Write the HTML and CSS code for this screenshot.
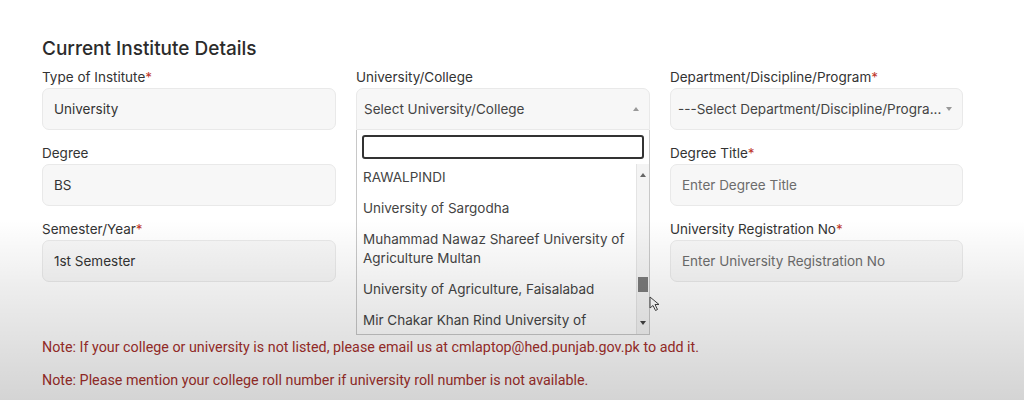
FILE: index.html
```html
<!DOCTYPE html>
<html>
<head>
  <title>Current Institute Details</title>
  <link rel="stylesheet" href="styles.css">
</head>
<body>
  <div class="page">
    <h2 class="section-title">Current Institute Details</h2>

    <div class="form-grid">
      <div class="field">
        <label>Type of Institute<span class="req">*</span></label>
        <div class="box">University</div>
      </div>

      <div class="field dropdown-field">
        <label>University/College</label>
        <div class="box select open">
          <span class="muted-dark">Select University/College</span>
          <span class="caret up"></span>
        </div>
        <div class="dropdown">
          <div class="search-wrap">
            <input class="search" type="text">
          </div>
          <div class="list-wrap">
            <ul class="options">
              <li class="first">RAWALPINDI</li>
              <li>University of Sargodha</li>
              <li>Muhammad Nawaz Shareef University of Agriculture Multan</li>
              <li>University of Agriculture, Faisalabad</li>
              <li>Mir Chakar Khan Rind University of</li>
            </ul>
            <div class="scrollbar">
              <span class="sb-arrow up"></span>
              <div class="sb-track"><div class="sb-thumb"></div></div>
              <span class="sb-arrow down"></span>
            </div>
          </div>
          <svg class="cursor" width="12" height="16" viewBox="0 0 12 16">
            <path d="M1 1 L1 12 L4 9.5 L6.5 14.5 L8.5 13.5 L6 8.5 L10 8.5 Z" fill="#fff" stroke="#444" stroke-width="1"/>
          </svg>
        </div>
      </div>

      <div class="field">
        <label>Department/Discipline/Program<span class="req">*</span></label>
        <div class="box select">
          <span class="muted-dark">---Select Department/Discipline/Progra...</span>
          <span class="caret down"></span>
        </div>
      </div>

      <div class="field">
        <label>Degree</label>
        <div class="box">BS</div>
      </div>

      <div class="field"></div>

      <div class="field">
        <label>Degree Title<span class="req">*</span></label>
        <div class="box placeholder">Enter Degree Title</div>
      </div>

      <div class="field">
        <label>Semester/Year<span class="req">*</span></label>
        <div class="box">1st Semester</div>
      </div>

      <div class="field"></div>

      <div class="field">
        <label>University Registration No<span class="req">*</span></label>
        <div class="box placeholder">Enter University Registration No</div>
      </div>
    </div>

    <p class="note first-note">Note: If your college or university is not listed, please email us at cmlaptop@hed.punjab.gov.pk to add it.</p>
    <p class="note">Note: Please mention your college roll number if university roll number is not available.</p>
  </div>
  <div class="shade"></div>
</body>
</html>
```

FILE: styles.css
```css
body {
    margin: 0;
    background-color: #ffffff;
    font-family: Inter, "Noto Sans", Arial, sans-serif;
    color: #333333;
    overflow: hidden;
}

.page {
    padding: 36px 0 0 42px;
    height: 364px;
}

.section-title {
    margin: 0 0 6px 0;
    font-size: 19px;
    font-weight: 500;
    color: #2b2b2b;
    line-height: 26px;
}

.form-grid {
    display: grid;
    grid-template-columns: 294px 294px 293px;
    column-gap: 20px;
    row-gap: 14px;
}

.field label {
    display: block;
    font-size: 13.5px;
    line-height: 18px;
    color: #333;
    margin-bottom: 2px;
}

.req {
    color: #c0392b;
}

.box {
    height: 42px;
    box-sizing: border-box;
    border: 1px solid #e9e9e9;
    border-radius: 7px;
    background-color: #f7f7f7;
    padding: 0 11px;
    display: flex;
    align-items: center;
    font-size: 13.5px;
    color: #333;
}

.box.placeholder {
    color: #6c6c6c;
}

.box.select {
    justify-content: space-between;
    padding-right: 10px;
    padding-left: 7px;
}

.muted-dark {
    color: #444;
    white-space: nowrap;
}

.caret {
    width: 0;
    height: 0;
    border-left: 3px solid transparent;
    border-right: 3px solid transparent;
}

.caret.up {
    border-bottom: 4px solid #999;
}

.caret.down {
    border-top: 4px solid #999;
}

.box.select.open {
    border-radius: 7px 7px 0 0;
}

/* dropdown overlay */
.dropdown-field {
    position: relative;
}

.dropdown {
    position: absolute;
    top: 62px;
    left: 0;
    width: 294px;
    box-sizing: border-box;
    background-color: #fff;
    border: 1px solid #c8c8c8;
    border-top: none;
    z-index: 10;
}

.search-wrap {
    padding: 5px 5px 5px 5px;
}

.search {
    display: block;
    width: 100%;
    height: 24px;
    box-sizing: border-box;
    border: 2px solid #333;
    border-radius: 3px;
    outline: none;
}

.list-wrap {
    display: flex;
    height: 170px;
    overflow: hidden;
}

.options {
    flex: 1;
    list-style: none;
    margin: 0;
    padding: 0;
}

.options li {
    padding: 6px 6px;
    font-size: 13.5px;
    line-height: 19px;
    color: #444;
}

.options li.first {
    padding-top: 4px;
}

.scrollbar {
    width: 12px;
    display: flex;
    flex-direction: column;
    align-items: center;
    background-color: #f4f4f4;
    border-left: 1px solid #e4e4e4;
}

.sb-arrow {
    width: 0;
    height: 0;
    border-left: 3px solid transparent;
    border-right: 3px solid transparent;
    margin: 9px 0;
}

.sb-arrow.up {
    border-bottom: 4px solid #666;
}

.sb-arrow.down {
    border-top: 4px solid #444;
}

.sb-track {
    flex: 1;
    width: 100%;
    display: flex;
    flex-direction: column;
    justify-content: flex-end;
    padding-bottom: 20px;
}

.sb-thumb {
    height: 15px;
    background-color: #7b7b7b;
    margin: 0 1px;
}

.cursor {
    position: absolute;
    left: 292px;
    top: 166px;
}

.note {
    margin: 0;
    font-family: Roboto, Arial, sans-serif;
    font-size: 14.3px;
    line-height: 18px;
    color: #a5302c;
}

.first-note {
    margin-top: 56px;
    margin-bottom: 15px;
}

.shade {
    position: absolute;
    left: 0;
    top: 0;
    width: 1024px;
    height: 400px;
    pointer-events: none;
    z-index: 20;
    background: linear-gradient(to bottom, rgba(0,0,0,0) 0%, rgba(0,0,0,0) 55%, rgba(0,0,0,0.07) 72%, rgba(0,0,0,0.17) 100%);
}
```
